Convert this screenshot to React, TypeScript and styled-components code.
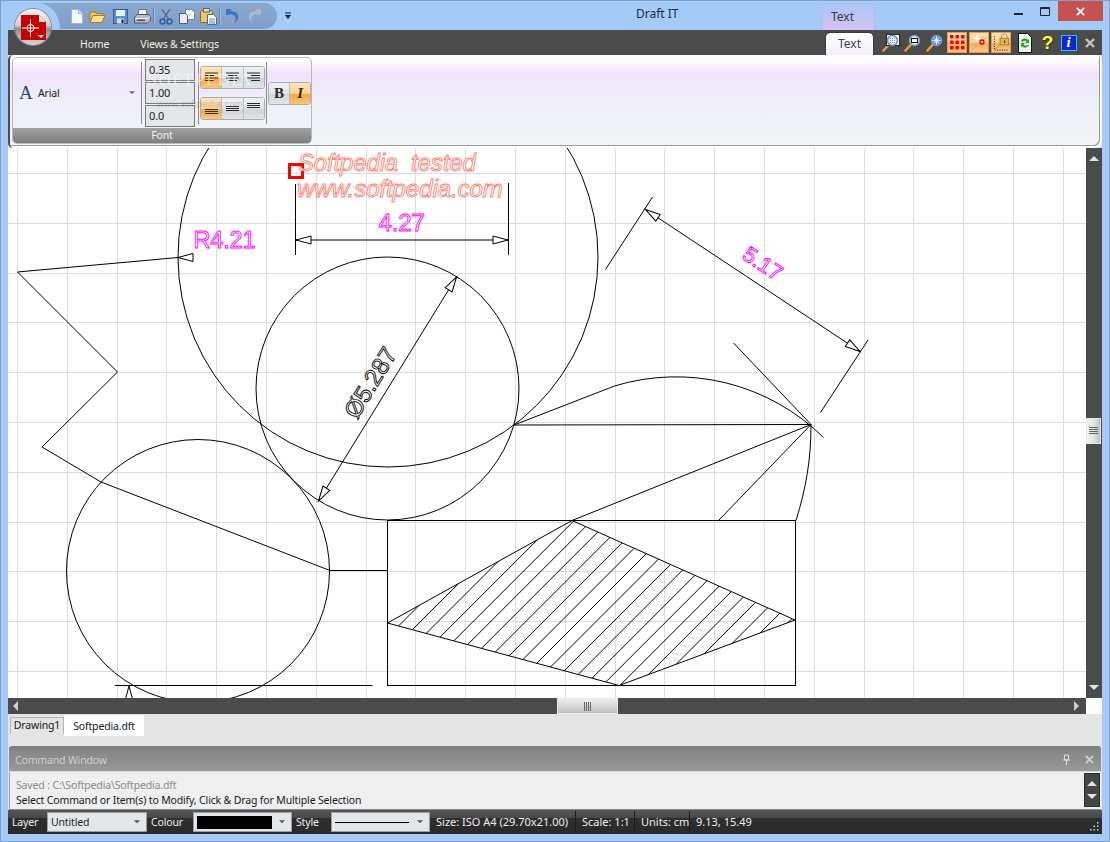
import styled, { createGlobalStyle } from "styled-components";

const GlobalStyle = createGlobalStyle`
  html, body {
    margin: 0;
    padding: 0;
    background: #a4cbf7;
  }
`;

const uiFont = `"Noto Sans", "Open Sans", sans-serif`;

const Window = styled.div`
  width: 1110px;
  height: 842px;
  display: flex;
  flex-direction: column;
  overflow: hidden;
  position: relative;
  box-sizing: border-box;
  background: #a4cbf7;
  font-family: ${uiFont};
  font-size: 10.5px;
  letter-spacing: -0.15px;
  box-shadow: inset 0 0 0 1px #7f9fc6;
`;

const TitleBar = styled.header`
  height: 30px;
  flex: none;
  display: flex;
  align-items: flex-start;
`;

const QuickAccess = styled.div`
  position: relative;
  margin: 3px 0 0 38px;
  width: 239px;
  height: 26px;
  padding-left: 30px;
  box-sizing: border-box;
  display: flex;
  align-items: center;
  background: linear-gradient(#88a8d0, #7f9fc8);
  border-radius: 0 13px 13px 0;

  &::before {
    content: "";
    position: absolute;
    left: 0;
    top: 0;
    bottom: 0;
    width: 22px;
    background: #a4cbf7;
    border-top-right-radius: 22px 26px;
  }
`;

const QuickIcon = styled.span<{ $w: number }>`
  width: ${(p) => p.$w}px;
  height: 18px;
  flex: none;
  display: flex;
  align-items: center;
  justify-content: center;
`;

const QuickSep = styled.span`
  width: 1px;
  height: 18px;
  flex: none;
  background: #6684ab;
  border-right: 1px solid #a6c0de;
`;

const Chevron = styled.span`
  width: 22px;
  height: 26px;
  margin-top: 3px;
  display: flex;
  align-items: center;
  justify-content: center;
`;

const Title = styled.div`
  margin: 6px 0 0 337px;
  width: 47px;
  font-size: 12px;
  line-height: 16px;
  letter-spacing: 0;
  white-space: nowrap;
  color: #1e2a3a;
`;

const ContextTab = styled.div`
  margin: 4px 0 0 139px;
  width: 53px;
  height: 26px;
  box-sizing: border-box;
  padding: 4px 0 0 8px;
  line-height: 18px;
  font-size: 12px;
  letter-spacing: 0;
  color: #333a4a;
  background: linear-gradient(#a8c8f6, #d6c2f7);
  border-left: 1px solid #c5b8e0;
  border-right: 1px solid #c5b8e0;
`;

const WindowButtons = styled.div`
  margin: 1px 7px 0 auto;
  display: flex;
`;

const WindowButton = styled.div<{ $w: number; $close?: boolean }>`
  width: ${(p) => p.$w}px;
  height: 20px;
  display: flex;
  align-items: center;
  justify-content: center;
  background: ${(p) => (p.$close ? "#c75050" : "transparent")};
`;

const Frame = styled.div`
  flex: 1;
  min-height: 0;
  margin: 0 8px 8px;
  display: flex;
  flex-direction: column;
  background: #e4e4e4;
`;

const TabStrip = styled.nav`
  height: 25px;
  flex: none;
  display: flex;
  align-items: flex-end;
  background: #4b4b4b;
`;

const TabLabel = styled.span<{ $left: number }>`
  margin-left: ${(p) => p.$left}px;
  height: 25px;
  line-height: 28px;
  color: #f0efe6;
  white-space: nowrap;
`;

const ActiveTab = styled.span`
  margin-left: auto;
  width: 47px;
  height: 22px;
  line-height: 22px;
  text-align: center;
  color: #3a4258;
  font-size: 12px;
  letter-spacing: 0;
  background: linear-gradient(#ffffff, #f5eefc);
  border-radius: 4px 4px 0 0;
  outline: 1px solid #3a3a3a;
`;

const ToolIcons = styled.div`
  margin: 0 2px 0 7px;
  height: 25px;
  display: flex;
  align-items: center;
`;

const ToolButton = styled.span<{ $w: number; $on?: boolean }>`
  width: ${(p) => (p.$on ? p.$w - 2 : p.$w)}px;
  margin: 0 ${(p) => (p.$on ? 1 : 0)}px;
  height: 21px;
  flex: none;
  display: flex;
  align-items: center;
  justify-content: center;
  box-sizing: border-box;
  border: ${(p) => (p.$on ? "1px solid #e59a45" : "none")};
  background: ${(p) =>
    p.$on ? "linear-gradient(#fde4bb 0%, #fbcf92 50%, #f7ae5c 51%, #fbc581 100%)" : "transparent"};
`;

const Ribbon = styled.section`
  height: 93px;
  flex: none;
  box-sizing: border-box;
  padding: 2px 0 4px 2px;
  background: linear-gradient(#ffffff 0%, #fdfbff 6%, #efe3fa 20%, #f0eef8 50%, #eff3f6 80%, #f3f6f8 100%);
  border-radius: 5px 6px 6px 5px;
  box-shadow: inset -2px -2px 0 #fff, inset -3px -3px 0 #9a9a9a;
  border-left: 2px solid #4b4b4b;
  position: relative;
`;

const Group = styled.div`
  width: 300px;
  height: 87px;
  box-sizing: border-box;
  display: flex;
  flex-direction: column;
  border: 1px solid #b9b9bd;
  border-radius: 5px;
  overflow: hidden;
`;

const GroupBody = styled.div`
  flex: 1;
  display: flex;
  align-items: center;
`;

const GroupFooter = styled.div`
  height: 15px;
  flex: none;
  text-align: center;
  line-height: 15px;
  color: #f2f2f2;
  background: linear-gradient(#a2a2a2, #7e7e7e);
`;

const FontPicker = styled.div`
  width: 128px;
  flex: none;
  display: flex;
  align-items: center;
  box-sizing: border-box;
  padding: 0 6px 0 6px;
`;

const FontGlyph = styled.span`
  font-family: "Liberation Serif", serif;
  font-size: 19px;
  line-height: 20px;
  color: #1f4a82;
  width: 19px;
`;

const FontName = styled.span`
  flex: 1;
  color: #20242c;
`;

const VSep = styled.span`
  width: 1px;
  height: 62px;
  flex: none;
  background: #8e8e8e;
`;

const Inputs = styled.div`
  width: 50px;
  flex: none;
  margin: 0 3px;
  display: flex;
  flex-direction: column;
  gap: 1px;
`;

const NumberBox = styled.div`
  height: 22px;
  box-sizing: border-box;
  padding-left: 3px;
  line-height: 20px;
  font-size: 11px;
  color: #1d2026;
  background: #e3e7ea;
  border: 1px solid #7a7a7a;
`;

const AlignColumn = styled.div`
  width: 65px;
  flex: none;
  margin: 0 1px;
  display: flex;
  flex-direction: column;
  gap: 8px;
`;

const ButtonGroup = styled.div`
  display: flex;
  border: 1px solid #a9b0b4;
  border-radius: 3px;
  overflow: hidden;
`;

const RibbonButton = styled.span<{ $on?: boolean }>`
  flex: 1;
  min-width: 0;
  height: 21px;
  display: flex;
  align-items: center;
  justify-content: center;
  font-family: "Liberation Serif", serif;
  font-size: 15px;
  color: #2c2c2c;
  border-left: 1px solid #b6bec2;
  &:first-child {
    border-left: none;
  }
  background: ${(p) =>
    p.$on
      ? "linear-gradient(#fde6bf 0%, #fbd08e 50%, #f8a93d 55%, #fbc374 100%)"
      : "linear-gradient(#eef1f2 0%, #dfe4e6 50%, #cfd6d8 55%, #e0e5e7 100%)"};
`;

const StyleColumn = styled.div`
  width: 43px;
  flex: none;
  margin-left: 1px;
`;

const Watermark = styled.div`
  position: absolute;
  left: 128px;
  top: 17px;
  width: 124px;
  pointer-events: none;
  text-align: center;
  color: rgba(255, 255, 255, 0.55);
  font-family: "Liberation Serif", serif;
  font-size: 17px;
  line-height: 16px;
  letter-spacing: 1.5px;

  small {
    display: block;
    margin-top: 11px;
    font-family: "Liberation Sans", sans-serif;
    font-size: 9px;
    line-height: 10px;
    letter-spacing: 0.5px;
    color: rgba(120, 120, 120, 0.4);
  }
`;

const Workspace = styled.div`
  flex: none;
  height: 566px;
  display: grid;
  grid-template-columns: 1fr 16px;
  grid-template-rows: 550px 16px;
`;

const Canvas = styled.svg`
  display: block;
  width: 1078px;
  height: 550px;
  background: #fff;
`;

const ScrollBar = styled.div<{ $vertical?: boolean }>`
  display: flex;
  flex-direction: ${(p) => (p.$vertical ? "column" : "row")};
  align-items: center;
  justify-content: space-between;
  position: relative;
  background: #4b4b4b;
  box-sizing: border-box;
  padding: ${(p) => (p.$vertical ? "5px 0" : "0 5px 0 3px")};
`;

const ScrollThumb = styled.div<{ $vertical?: boolean }>`
  position: absolute;
  display: flex;
  align-items: center;
  justify-content: center;
  box-sizing: border-box;
  border: 1px solid #e8e8e8;
  ${(p) =>
    p.$vertical
      ? `left: 0; top: 270px; width: 15px; height: 26px; background: linear-gradient(90deg, #f4f4f4, #e2e2e2 55%, #bdbdbd);`
      : `left: 549px; top: 0; width: 61px; height: 16px; background: linear-gradient(#ededed, #d8d8d8 50%, #bcbcbc);`}
`;

const Corner = styled.div`
  background: #fff;
`;

const DocTabs = styled.div`
  height: 32px;
  flex: none;
  display: flex;
  align-items: flex-start;
  padding-left: 2px;
`;

const DocTab = styled.span<{ $active?: boolean }>`
  box-sizing: border-box;
  color: #15181c;
  ${(p) =>
    p.$active
      ? `height: 21px; width: 80px; margin-top: 1px; background: #fff; text-align: center; line-height: 22px;`
      : `height: 17px; width: 54px; margin-top: 3px; border: 1px solid #b4b4b4; border-bottom: none; text-align: center; line-height: 15px;`}
`;

const CommandWindow = styled.section`
  height: 64px;
  flex: none;
  margin: 0 1px;
  display: flex;
  flex-direction: column;
  border-bottom: 1px solid #8a8a8a;
  box-sizing: border-box;
`;

const CommandHeader = styled.div`
  height: 26px;
  flex: none;
  display: flex;
  align-items: center;
  box-sizing: border-box;
  padding: 2px 7px 0 6px;
  gap: 14px;
  color: #cfcfcf;
  border-radius: 3px 3px 0 0;
  border-bottom: 1px solid #d8d8d8;
  background: linear-gradient(#7c7c7c 0%, #8a8a8a 30%, #8e8e8e 60%, #9a9a9a 100%);
`;

const CommandTitle = styled.span`
  flex: 1;
`;

const CommandBody = styled.div`
  flex: 1;
  min-height: 0;
  display: flex;
  background: #efefef;
  border-left: 1px solid #a0a0a0;
`;

const CommandLog = styled.div`
  flex: 1;
  padding: 6px 0 0 6px;
  line-height: 15px;
  overflow: hidden;
`;

const LogLine = styled.div<{ $muted?: boolean }>`
  color: ${(p) => (p.$muted ? "#8a8a8a" : "#15181c")};
  white-space: nowrap;
`;

const CommandScroll = styled.div`
  width: 16px;
  margin: 1px 1px 2px 0;
  display: flex;
  flex-direction: column;
  align-items: center;
  justify-content: space-between;
  padding: 4px 0;
  box-sizing: border-box;
  background: #454545;
  border: 1px solid #2b2b2b;
`;

const StatusBar = styled.footer`
  height: 24px;
  flex: none;
  display: flex;
  align-items: center;
  color: #efefef;
  background: linear-gradient(#565656 0%, #484848 32%, #2e2e2e 34%, #2a2a2a 100%);
`;

const StatusLabel = styled.span<{ $w: number }>`
  width: ${(p) => p.$w}px;
  flex: none;
  box-sizing: border-box;
  padding-left: 4px;
`;

const Combo = styled.div<{ $w: number }>`
  width: ${(p) => p.$w}px;
  height: 20px;
  flex: none;
  box-sizing: border-box;
  display: flex;
  align-items: center;
  padding: 0 6px 0 3px;
  color: #20242c;
  background: #e4e7ea;
  border: 1px solid #9aa0a6;
`;

const ComboValue = styled.span`
  flex: 1;
  display: flex;
  align-items: center;
`;

const ColourSwatch = styled.span`
  width: 75px;
  height: 13px;
  background: #000;
`;

const StyleLine = styled.span`
  width: 74px;
  height: 1px;
  background: #000;
`;

const StatusCell = styled.span<{ $w: number; $sep?: boolean }>`
  width: ${(p) => p.$w}px;
  flex: none;
  height: 22px;
  line-height: 22px;
  box-sizing: border-box;
  padding-left: 6px;
  font-size: 11px;
  letter-spacing: 0;
  white-space: nowrap;
  border-left: ${(p) => (p.$sep ? "1px solid #1b1b1b" : "none")};
`;

const Grip = styled.span`
  margin: 8px 3px 0 auto;
  display: flex;
`;

// small toolbar drawings
const NewIcon = () => (
  <svg width="14" height="17" viewBox="0 0 14 17">
    <path d="M1.5 1.5h7l4 4v10h-11z" fill="#f6f9fd" stroke="#9db7d8" />
    <path d="M8.5 1.5v4h4" fill="#d5e2f2" stroke="#9db7d8" />
  </svg>
);

const OpenIcon = () => (
  <svg width="17" height="15" viewBox="0 0 17 15">
    <path d="M1 13V3h5l1.5 1.5H14V7" fill="#f4c95a" stroke="#a67a1e" />
    <path d="M1 13.5 4 6.5h12l-3 7z" fill="#fbe08f" stroke="#a67a1e" />
  </svg>
);

const SaveIcon = () => (
  <svg width="15" height="15" viewBox="0 0 15 15">
    <rect x="0.5" y="0.5" width="14" height="14" fill="#5d8fc9" stroke="#2f5d98" />
    <rect x="3" y="1" width="9" height="6" fill="#eaf2fb" />
    <rect x="4" y="9.5" width="7" height="5" fill="#d7dde4" />
    <rect x="8.5" y="10.5" width="2" height="3.5" fill="#222" />
  </svg>
);

const PrintIcon = () => (
  <svg width="18" height="16" viewBox="0 0 18 16">
    <path d="M6 1.5h7l1 5H5z" fill="#f4f6f8" stroke="#6e767e" />
    <path d="M1.5 9 4.5 6.5h11l2 2.5v3.5l-3 2.5H1.5z" fill="#b5bcc3" stroke="#50565c" />
    <path d="M2 10.5h12.5l2.5-2" fill="none" stroke="#eef0f2" />
    <rect x="4" y="11.5" width="8" height="1.5" fill="#4a4f55" />
  </svg>
);

const CutIcon = () => (
  <svg width="14" height="17" viewBox="0 0 14 17">
    <path d="M3 1l6.5 10M11 1 4.5 11" stroke="#5a6570" strokeWidth="1.3" fill="none" />
    <circle cx="3.5" cy="13.5" r="2.5" fill="none" stroke="#2f5da8" strokeWidth="1.5" />
    <circle cx="10.5" cy="13.5" r="2.5" fill="none" stroke="#2f5da8" strokeWidth="1.5" />
  </svg>
);

const CopyIcon = () => (
  <svg width="16" height="15" viewBox="0 0 16 15">
    <path d="M6.5 0.5h6l3 3v7h-9z" fill="#f4f7fb" stroke="#7a8896" />
    <path d="M0.5 4.5h6l2 2v8h-8z" fill="#e8eef6" stroke="#3d5f8c" />
  </svg>
);

const PasteIcon = () => (
  <svg width="17" height="17" viewBox="0 0 17 17">
    <rect x="0.5" y="2.5" width="12" height="12" rx="1" fill="#f2c65c" stroke="#8d6a1d" />
    <rect x="3.5" y="0.5" width="6" height="3.5" fill="#d7dde4" stroke="#5e6670" />
    <path d="M7.5 6.5h6l3 3v7h-9z" fill="#f6f9fd" stroke="#3d6ca8" />
    <path d="M9 11h6M9 13h6M9 15h6" stroke="#5d8fc9" />
  </svg>
);

const ArrowBack = ({ color, flip }: { color: string; flip?: boolean }) => (
  <svg width="14" height="16" viewBox="0 0 14 16" style={flip ? { transform: "scaleX(-1)" } : undefined}>
    <path d="M1 7 1 1 7 1 5.2 3C10 2.5 14 5.5 13 10c-.4 2.2-2 4-4 5.5 1.5-2.5 2.2-4.5 1.3-6.5C9.5 7 7.5 6 4.2 6.500z" fill={color} />
  </svg>
);

const Magnifier = ({ kind }: { kind: "window" | "fit" | "all" }) => (
  <svg width="18" height="18" viewBox="0 0 18 18">
    <path d="M1.5 16.5 6.5 11" stroke="#f09a2e" strokeWidth="2.5" strokeLinecap="round" />
    {kind === "window" && <rect x="4.5" y="0.5" width="13" height="11" fill="#fff" stroke="#222" />}
    <circle cx="10.5" cy="6.5" r="5" fill={kind === "all" ? "#5a8fe0" : "#e2edf9"} stroke={kind === "window" ? "#6b8cc0" : "#7a9ccc"} strokeWidth="1.5" />
    {kind === "fit" && <rect x="7.5" y="4.5" width="6" height="4" fill="#fff" stroke="#111" />}
    {kind === "window" && <path d="M8 4.5h5M8 6.5h5M8 8.5h5" stroke="#8aa4c8" strokeDasharray="1 1" />}
    {kind === "all" && <path d="M10.5 2.5v8M6.5 6.5h8M8 4l5 5M13 4l-5 5" stroke="#fff" strokeWidth="0.9" />}
  </svg>
);

const GridDots = () => (
  <svg width="15" height="15" viewBox="0 0 15 15" fill="#f00">
    {[0, 5.5, 11].flatMap((y) =>
      [0, 5.5, 11].map((x) => <rect key={`${x}-${y}`} x={x} y={y} width="3.5" height="3.5" />),
    )}
  </svg>
);

const SnapIcon = () => (
  <svg width="17" height="17" viewBox="0 0 17 17">
    <path d="M1 16 16 3" stroke="#c9a9a0" />
    <path d="M6 1.5v6M3 4.5h6" stroke="#fff" strokeWidth="1.3" />
    <circle cx="11" cy="8" r="2" fill="none" stroke="#e00000" strokeWidth="1.3" />
  </svg>
);

const LockIcon = () => (
  <svg width="19" height="19" viewBox="0 0 19 19">
    <path d="M2.5 3v14.5H18" stroke="#111" strokeDasharray="1 1.5" fill="none" />
    <path d="M3 17 10 10" stroke="#b88" />
    <path d="M10 5V3.5a3 3 0 0 1 6 0V5" stroke="#9b8a66" fill="none" />
    <rect x="8.5" y="5" width="9" height="7" fill="#e3b64c" stroke="#a17b22" />
    <rect x="12.5" y="7.5" width="1.5" height="2.5" fill="#5a430f" />
  </svg>
);

const RefreshDoc = () => (
  <svg width="14" height="20" viewBox="0 0 14 20">
    <path d="M0.5 0.5h9l4 4v15H0.5z" fill="#eef3ee" stroke="#111" />
    <path d="M3 8a4 4 0 0 1 7-1l1-1v4H7l1.5-1.5A2.5 2.5 0 0 0 4.5 9z" fill="#1fa81f" />
    <path d="M11 12a4 4 0 0 1-7 1l-1 1v-4h4l-1.5 1.5a2.5 2.5 0 0 0 4 .5z" fill="#1fa81f" />
  </svg>
);

const HelpMark = styled.span`
  font-family: "Liberation Sans", sans-serif;
  font-weight: 700;
  font-size: 19px;
  line-height: 19px;
  color: #ffff20;
  text-shadow: 1px 1px 0 #333;
`;

const InfoMark = styled.span`
  width: 16px;
  height: 16px;
  box-sizing: border-box;
  display: flex;
  align-items: center;
  justify-content: center;
  font-family: "Liberation Serif", serif;
  font-style: italic;
  font-weight: 700;
  font-size: 15px;
  color: #fff;
  background: #0a28d8;
  border: 1px solid #19c8ff;
`;

const CloseCross = ({ size, color, width = 2 }: { size: number; color: string; width?: number }) => (
  <svg width={size} height={size} viewBox="0 0 10 10">
    <path d="M1 1l8 8M9 1 1 9" stroke={color} strokeWidth={width} />
  </svg>
);

const Tri = ({ dir, color = "#e2e2e2", size = 5 }: { dir: "up" | "down" | "left" | "right"; color?: string; size?: number }) => {
  const pts = { up: "0,8 5,3 10,8", down: "0,2 10,2 5,7", left: "7,0 7,10 2,5", right: "3,0 3,10 8,5" }[dir];
  return (
    <svg width={size * 2} height={size * 2} viewBox="0 0 10 10">
      <polygon points={pts} fill={color} />
    </svg>
  );
};

const AlignLines = ({ rows }: { rows: [number, number][] }) => (
  <svg width="15" height="13" viewBox="0 0 15 13">
    {rows.map(([x, w], i) => (
      <rect key={i} x={x} y={i * 2.5 + (13 - rows.length * 2.5) / 2} width={w} height="1" fill="#2b2b2b" />
    ))}
  </svg>
);

const LogoBadge = styled.div`
  position: absolute;
  left: 15px;
  top: 9px;
  width: 36px;
  height: 36px;
  border-radius: 50%;
  display: flex;
  align-items: center;
  justify-content: center;
  background: linear-gradient(#f4f4f4 0%, #d0d0d0 45%, #8d8d8d 55%, #d8d8d8 100%);
  box-shadow: 0 0 0 1px #8a8a8a;
`;

const Logo = () => (
  <LogoBadge>
    <svg width="25" height="25" viewBox="0 0 25 25">
      <path d="M0 0h18l7 7v18H0z" fill="#c80000" />
      <path d="M18 0v7h7z" fill="#f5dede" />
      <path d="M1 13h17M9.5 4v18" stroke="#fff" />
      <circle cx="9.5" cy="13" r="3.5" fill="none" stroke="#fff" />
      <polygon points="17,20 23,20 20,23" fill="#fff" />
    </svg>
  </LogoBadge>
);

// the drawing sheet, in window coordinates
const gridX = Array.from({ length: 22 }, (_, i) => 17.5 + i * 49.8);
const gridY = Array.from({ length: 11 }, (_, i) => 173.5 + i * 49.8);
const hatchC = Array.from({ length: 23 }, (_, i) => 1024.5 + i * 17.55);

const Arrow = ({ x, y, angle }: { x: number; y: number; angle: number }) => (
  <polygon
    points="0,0 15,-4 15,4"
    transform={`translate(${x} ${y}) rotate(${angle})`}
    fill="#fff"
    stroke="#000"
    strokeWidth="1"
  />
);

const Sheet = () => (
  <Canvas viewBox="8 148 1078 550">
    <defs>
      <clipPath id="hatch-area">
        <polygon points="387.5,623 572,520.5 795,620 619,685.5" />
      </clipPath>
    </defs>
    <g stroke="#dcdcdc" shapeRendering="crispEdges">
      {gridX.map((x) => <line key={x} x1={x} x2={x} y1={148} y2={698} />)}
      {gridY.map((y) => <line key={y} y1={y} y2={y} x1={8} x2={1086} />)}
    </g>
    <g fill="none" stroke="#000" strokeWidth="1">
      <circle cx="388" cy="257" r="210" />
      <circle cx="387.5" cy="388.5" r="131.5" />
      <circle cx="198" cy="571" r="131.5" />
      <polyline points="178,257.5 17.5,272 117.5,372 42,447 101,482 330,570.5 387.5,570.5" />
      <rect x="387.5" y="520.5" width="408" height="165" />
      <polygon points="387.5,623 572,520.5 795,620 619,685.5" />
      <g clipPath="url(#hatch-area)">
        {hatchC.map((c) => <line key={c} x1={c - 500} y1={500} x2={c - 720} y2={720} />)}
      </g>
      <path d="M514 425 811 424.5M572 520.5 811 424.5M718.5 520.5 811 424.5M733.5 343 811 424.5" />
      <path d="M811 424.5C811 460 806 488 796 520.5" />
      <path d="M514 425 614.5 386A210 210 0 0 1 823.5 437.5" />
      <path d="M295.5 184V255M508.5 183V255M296 240H508" />
      <path d="M605.5 269.5 652.5 197M820.5 412.5 868 340M645.5 209.5 860 351.5" />
      <path d="M318.5 501 456.5 277" />
      <path d="M115 685.5H372.5" />
    </g>
    <Arrow x={178} y={257.5} angle={0} />
    <Arrow x={296} y={240} angle={0} />
    <Arrow x={508} y={240} angle={180} />
    <Arrow x={645.5} y={209.5} angle={33.5} />
    <Arrow x={860} y={351.5} angle={213.5} />
    <Arrow x={318.5} y={501} angle={-58.4} />
    <Arrow x={456.5} y={277} angle={121.6} />
    <Arrow x={129} y={686} angle={90} />
    <rect x="289.5" y="164.5" width="13" height="13" fill="none" stroke="#f00" strokeWidth="3" />
    <g fontFamily='"Liberation Sans", sans-serif' strokeWidth="0.9">
      <g fill="#fff" stroke="#ff00ff">
        <text x="193.5" y="248" fontSize="23.5">R4.21</text>
        <text x="378.5" y="231" fontSize="24">4.27</text>
        <text x="741" y="258" fontSize="22" transform="rotate(33.5 741 258)">5.17</text>
      </g>
      <g fill="#fff" stroke="#ff7f70" fontStyle="italic">
        <text x="298" y="171" fontSize="24" style={{ whiteSpace: "pre" }}>Softpedia  tested</text>
        <text x="297" y="197" fontSize="24.2">www.softpedia.com</text>
      </g>
      <text x="357" y="420" fontSize="24" fill="#fff" stroke="#000" transform="rotate(-58.4 357 420)">Ø5.287</text>
    </g>
  </Canvas>
);

const App = () => {
  return (
    <Window>
      <GlobalStyle />
      <TitleBar>
        <QuickAccess>
          <QuickIcon $w={18}><NewIcon /></QuickIcon>
          <QuickIcon $w={23}><OpenIcon /></QuickIcon>
          <QuickIcon $w={22}><SaveIcon /></QuickIcon>
          <QuickIcon $w={22}><PrintIcon /></QuickIcon>
          <QuickSep />
          <QuickIcon $w={21}><CutIcon /></QuickIcon>
          <QuickIcon $w={21}><CopyIcon /></QuickIcon>
          <QuickIcon $w={22}><PasteIcon /></QuickIcon>
          <QuickSep />
          <QuickIcon $w={22}><ArrowBack color="#3a74c4" /></QuickIcon>
          <QuickIcon $w={24}><ArrowBack color="#b0b8c2" flip /></QuickIcon>
        </QuickAccess>
        <Chevron>
          <svg width="8" height="8" viewBox="0 0 8 8">
            <path d="M1 1h6" stroke="#1a1a1a" />
            <polygon points="1,3 7,3 4,7" fill="#1a1a1a" />
          </svg>
        </Chevron>
        <Title>Draft IT</Title>
        <ContextTab>Text</ContextTab>
        <WindowButtons>
          <WindowButton $w={26}>
            <svg width="9" height="10" viewBox="0 0 9 10"><rect y="7" width="9" height="2" fill="#222" /></svg>
          </WindowButton>
          <WindowButton $w={27}>
            <svg width="10" height="9" viewBox="0 0 10 9"><path d="M.5 .5h9v8h-9z" fill="none" stroke="#222" /><path d="M0 1.5h10" stroke="#222" /></svg>
          </WindowButton>
          <WindowButton $w={45} $close>
            <CloseCross size={9} color="#fff" />
          </WindowButton>
        </WindowButtons>
      </TitleBar>
      <Logo />
      <Frame>
        <TabStrip>
          <TabLabel $left={72}>Home</TabLabel>
          <TabLabel $left={31}>Views &amp; Settings</TabLabel>
          <ActiveTab>Text</ActiveTab>
          <ToolIcons>
            <ToolButton $w={21}><Magnifier kind="window" /></ToolButton>
            <ToolButton $w={23}><Magnifier kind="fit" /></ToolButton>
            <ToolButton $w={22}><Magnifier kind="all" /></ToolButton>
            <ToolButton $w={22} $on><GridDots /></ToolButton>
            <ToolButton $w={22} $on><SnapIcon /></ToolButton>
            <ToolButton $w={22} $on><LockIcon /></ToolButton>
            <ToolButton $w={26}><RefreshDoc /></ToolButton>
            <ToolButton $w={19}><HelpMark>?</HelpMark></ToolButton>
            <ToolButton $w={23}><InfoMark>i</InfoMark></ToolButton>
            <ToolButton $w={20}><CloseCross size={10} color="#c4c4c4" width={2.4} /></ToolButton>
          </ToolIcons>
        </TabStrip>
        <Ribbon>
          <Group>
            <GroupBody>
              <FontPicker>
                <FontGlyph>A</FontGlyph>
                <FontName>Arial</FontName>
                <Tri dir="down" color="#6b7078" size={3} />
              </FontPicker>
              <VSep />
              <Inputs>
                <NumberBox>0.35</NumberBox>
                <NumberBox>1.00</NumberBox>
                <NumberBox>0.0</NumberBox>
              </Inputs>
              <VSep />
              <AlignColumn>
                <ButtonGroup>
                  <RibbonButton $on><AlignLines rows={[[1, 13], [1, 9], [1, 13], [1, 9]]} /></RibbonButton>
                  <RibbonButton><AlignLines rows={[[1, 13], [3, 9], [1, 13], [3, 9]]} /></RibbonButton>
                  <RibbonButton><AlignLines rows={[[1, 13], [5, 9], [1, 13], [5, 9]]} /></RibbonButton>
                </ButtonGroup>
                <ButtonGroup>
                  <RibbonButton $on>
                    <svg width="15" height="13" viewBox="0 0 15 13"><path d="M1 7.5h13M1 9.5h13M1 11.5h13" stroke="#2b2b2b" /></svg>
                  </RibbonButton>
                  <RibbonButton>
                    <svg width="15" height="13" viewBox="0 0 15 13"><path d="M1 4.5h13M1 6.5h13M1 8.5h13" stroke="#2b2b2b" /></svg>
                  </RibbonButton>
                  <RibbonButton>
                    <svg width="15" height="13" viewBox="0 0 15 13"><path d="M1 1.5h13M1 3.5h13M1 5.5h13" stroke="#2b2b2b" /></svg>
                  </RibbonButton>
                </ButtonGroup>
              </AlignColumn>
              <VSep />
              <StyleColumn>
                <ButtonGroup>
                  <RibbonButton><b>B</b></RibbonButton>
                  <RibbonButton $on><b><i>I</i></b></RibbonButton>
                </ButtonGroup>
              </StyleColumn>
            </GroupBody>
            <GroupFooter>Font</GroupFooter>
          </Group>
          <Watermark>
            SOFTPEDIA
            <small>www.softpedia.com</small>
          </Watermark>
        </Ribbon>
        <Workspace>
          <Sheet />
          <ScrollBar $vertical>
            <Tri dir="up" />
            <ScrollThumb $vertical>
              <svg width="9" height="8" viewBox="0 0 9 8"><path d="M0 .5h9M0 2.5h9M0 4.5h9M0 6.5h9" stroke="#666" /></svg>
            </ScrollThumb>
            <Tri dir="down" />
          </ScrollBar>
          <ScrollBar>
            <Tri dir="left" color="#cfcfcf" />
            <ScrollThumb>
              <svg width="8" height="9" viewBox="0 0 8 9"><path d="M.5 0v9M2.5 0v9M4.5 0v9M6.5 0v9" stroke="#666" /></svg>
            </ScrollThumb>
            <Tri dir="right" color="#cfcfcf" />
          </ScrollBar>
          <Corner />
        </Workspace>
        <DocTabs>
          <DocTab>Drawing1</DocTab>
          <DocTab $active>Softpedia.dft</DocTab>
        </DocTabs>
        <CommandWindow>
          <CommandHeader>
            <CommandTitle>Command Window</CommandTitle>
            <svg width="9" height="11" viewBox="0 0 9 11">
              <path d="M2.5 1h4v5h-4zM1 6h7M4.5 6v5" fill="none" stroke="#dcdcdc" />
            </svg>
            <CloseCross size={9} color="#d0d0d0" />
          </CommandHeader>
          <CommandBody>
            <CommandLog>
              <LogLine $muted>Saved : C:\Softpedia\Softpedia.dft</LogLine>
              <LogLine>Select Command or Item(s) to Modify, Click &amp; Drag for Multiple Selection</LogLine>
            </CommandLog>
            <CommandScroll>
              <Tri dir="up" />
              <Tri dir="down" />
            </CommandScroll>
          </CommandBody>
        </CommandWindow>
        <StatusBar>
          <StatusLabel $w={39}>Layer</StatusLabel>
          <Combo $w={100}>
            <ComboValue>Untitled</ComboValue>
            <Tri dir="down" color="#555" size={3} />
          </Combo>
          <StatusLabel $w={46}>Colour</StatusLabel>
          <Combo $w={99}>
            <ComboValue><ColourSwatch /></ComboValue>
            <Tri dir="down" color="#555" size={3} />
          </Combo>
          <StatusLabel $w={39}>Style</StatusLabel>
          <Combo $w={99}>
            <ComboValue><StyleLine /></ComboValue>
            <Tri dir="down" color="#555" size={3} />
          </Combo>
          <StatusCell $w={145}>Size: ISO A4 (29.70x21.00)</StatusCell>
          <StatusCell $w={59} $sep>Scale: 1:1</StatusCell>
          <StatusCell $w={55} $sep>Units: cm</StatusCell>
          <StatusCell $w={70} $sep>9.13, 15.49</StatusCell>
          <Grip>
            <svg width="9" height="9" viewBox="0 0 9 9" fill="#cfcfcf">
              <rect x="7" y="0" width="1.5" height="1.5" />
              <rect x="3.5" y="3.5" width="1.5" height="1.5" />
              <rect x="7" y="3.5" width="1.5" height="1.5" />
              <rect x="0" y="7" width="1.5" height="1.5" />
              <rect x="3.5" y="7" width="1.5" height="1.5" />
              <rect x="7" y="7" width="1.5" height="1.5" />
            </svg>
          </Grip>
        </StatusBar>
      </Frame>
    </Window>
  );
};

export default App;
